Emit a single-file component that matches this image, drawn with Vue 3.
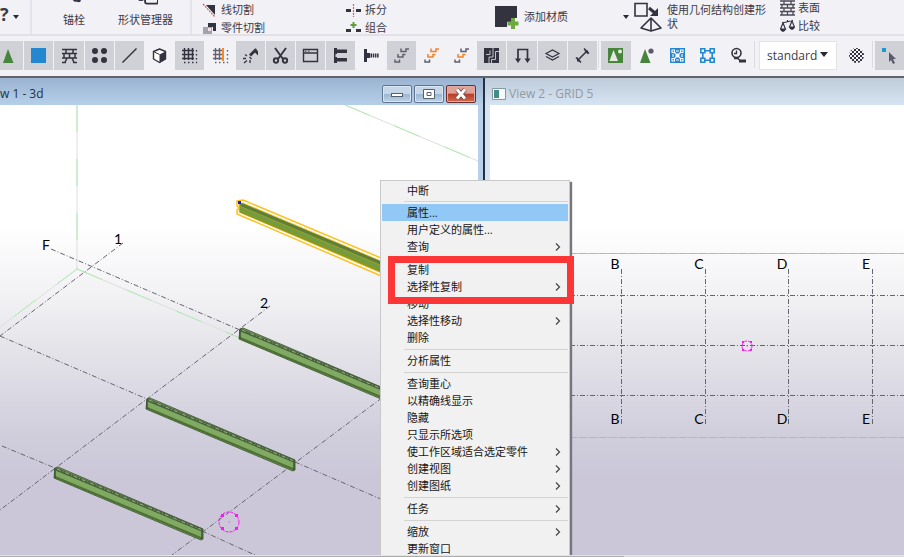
<script setup>
const ink = '#33323f'
const zShapes = (a, b, c) =>
  `<g fill="none" stroke-width="1.5"><path stroke="${a}" d="M14 7.500v3h5v-2.500h3"/><path stroke="${b}" d="M11 13v3h5v-2.500h2.500"/><path stroke="${c}" d="M8 18.500v2.500h4.500v-2.500"/></g>`
const grid = `<g fill="none" stroke="${ink}" stroke-width="1.5"><path d="M9.500 7v12M13.500 7v12M17.500 7v12M7 9.500h12M7 13.500h12M7 17.500h12"/><path stroke-width="1.300" stroke-dasharray="1.500 2.500" d="M21.500 9v13M9 21.500h13"/></g>`
const paleGrid = `<g fill="none" stroke="#62616d" stroke-width="1.4"><path d="M9.500 7v12M13.500 7v12M7 9.500h9M7 13.500h9M7 17.500h9"/><path stroke-dasharray="1.500 2.500" d="M21.500 9v13M9 21.500h13"/></g>`

const tools = [
  { name: '视图绿色三角', on: true, art: '<path fill="#47843c" d="M14 8L19.500 22H9z"/>' },
  { name: '面', on: true, art: '<path fill="#2388cf" d="M7 7h15v15H7z"/>' },
  { name: '钢筋网', on: true, art: `<path fill="none" stroke="${ink}" stroke-width="1.500" d="M7 8.500h15M7 12.500h15M7 17h15M7 21.500h4M18 21.500h4M11 8v4M18 8v4M14.500 12v5M12 17l-2 4.500M17 17l2 4.500M9 12.500V17M20 12.500V17"/>` },
  { name: '螺栓组', on: true, art: `<g fill="${ink}"><circle cx="10" cy="10" r="3"/><circle cx="19" cy="10" r="3"/><circle cx="10" cy="19" r="3"/><circle cx="19" cy="19" r="3"/></g>` },
  { name: '线', on: true, art: `<path stroke="${ink}" stroke-width="1.500" d="M7.500 21.500l14-14"/>` },
  { name: '实体', art: `<path fill="#fff" stroke="${ink}" stroke-width="1.400" stroke-linejoin="round" d="M14.500 8l6 2.500v7.500l-6 3.500-6-3.500v-7.500z"/><path fill="${ink}" d="M14.500 13.500l6-3v8l-6 3.500z"/><path fill="none" stroke="${ink}" d="M8.500 10.500l6 3"/>` },
  { name: '轴线', on: true, art: grid },
  { name: '轴线面', art: paleGrid + '<path fill="#f58a2b" d="M16 7h2v13h-2z"/>' },
  { name: '焊接', on: true, art: `<path fill="${ink}" d="M13 13.500L19 7.500h1l2 3v4l-3-3-4 4z"/><path stroke="${ink}" stroke-width="1.300" d="M11 15l-2-1.500M10 17.500H7M11 19.500l-3 2.500M14 19v3M13.500 16l2 2"/>` },
  { name: '切割', on: true, art: `<g fill="none" stroke="${ink}" stroke-width="1.900"><path d="M9 7l8 11M20 7l-8 11"/><circle cx="10" cy="19.500" r="2.200"/><circle cx="19" cy="19.500" r="2.200"/></g>` },
  { name: '视图', on: true, art: `<path fill="none" stroke="${ink}" stroke-width="1.400" d="M7.500 8.500h14v12h-14zM7.500 12h14"/><path stroke="${ink}" d="M9 10.200h1.500M12 10.200h1.500"/>` },
  { name: '构件', on: true, art: `<path fill="${ink}" d="M8 7h3v1.500h10v3.500H11v1H8zM8 16h3v1h10v3.500H11V22H8zM8 12h1.500v5H8z"/>` },
  { name: '单个螺栓', art: `<path fill="${ink}" d="M7 8h3v4h3v5h-3v4H7z"/><path stroke="${ink}" stroke-width="4" stroke-dasharray="1.500 .7" d="M13.500 14.500H22"/>` },
  { name: '钢筋', on: true, art: zShapes('#62616d', '#62616d', '#62616d') },
  { name: '钢筋组', art: zShapes('#f28227', '#f28227', '#62616d') },
  { name: '单根钢筋', art: zShapes('#62616d', '#f28227', '#62616d') },
  { name: '浇筑', on: true, art: `<path fill="${ink}" d="M7 7h15v15H7z"/><path fill="none" stroke="#d0d0d7" stroke-width=".9" d="M16 7v9h-4v6M22 10.500h-3.500v8h-4V22M13 9.500v4H9"/>` },
  { name: '荷载', on: true, art: `<path fill="none" stroke="${ink}" stroke-width="1.700" d="M10 19V8.500h9.500V19"/><path fill="${ink}" d="M7 17.500h6L10 22zM16.500 17.500h6L19.500 22z"/>` },
  { name: '图层', on: true, art: `<path fill="none" stroke="${ink}" stroke-width="1.200" d="M8 12.500l6.500-3.500 6.500 3.500-6.500 3.500zM8 15.500l6.500 3.500 6.500-3.500"/>` },
  { name: '尺寸', on: true, art: `<path fill="none" stroke="${ink}" stroke-width="1.500" d="M10 19L19 10M16 7.500l5 5M8 16.500l5 5"/><path fill="${ink}" d="M9 16v4.500h4zM16 9.500h4v4z"/>` },
]
const viewTools = [
  { name: '选择组件', on: true, art: '<path fill="#47843c" d="M7 7h15v15H7z"/><path fill="#e6eadf" d="M12.500 9L17 20H8.500z"/><circle cx="19" cy="10.500" r="2" fill="#e6eadf"/>' },
  { name: '选择对象', art: '<path fill="#47843c" d="M13 8l5.500 14H8z"/><circle cx="19" cy="10" r="2.600" fill="#5c5a6a"/>' },
  { name: '选择构件', art: '<path fill="#2388cf" d="M7 7h15v15H7z"/><g fill="none" stroke="#fff" stroke-width="1.100"><path d="M9 9h2.500v2.500H9zM17.500 9H20v2.500h-2.500zM9 17.500h2.500V20H9zM17.500 17.500H20V20h-2.500zM11.500 11.500l6 6M17.500 11.500l-6 6M13 10h3M13 19h3M10 13v3M19 13v3"/></g><circle cx="14.500" cy="14.500" r="2" fill="#fff"/>' },
  { name: '选择构件中的对象', art: '<path fill="none" stroke="#2388cf" stroke-width="1.600" d="M7.800 7.800h4v4h-4zM17.200 7.800h4v4h-4zM7.800 17.200h4v4h-4zM17.200 17.200h4v4h-4zM12 9.800h5M12 19.200h5M9.800 12v5M19.200 12v5"/>' },
  { name: '测量', art: `<circle cx="12.500" cy="12" r="4.500" fill="none" stroke="${ink}" stroke-width="1.600"/><path fill="none" stroke="${ink}" stroke-width="1.300" d="M12.500 9.500v3h-2.500M10 17.500h4l2 2"/><path fill="${ink}" d="M15 18.500h7v3h-7z"/>` },
]

const menu = [
  [{ t: '中断' }],
  [{ t: '属性...', hot: true }, { t: '用户定义的属性...' }, { t: '查询', sub: true }],
  [{ t: '复制' }, { t: '选择性复制', sub: true }, { t: '移动' }, { t: '选择性移动', sub: true }, { t: '删除' }],
  [{ t: '分析属性' }],
  [
    { t: '查询重心' }, { t: '以精确线显示' }, { t: '隐藏' }, { t: '只显示所选项' },
    { t: '使工作区域适合选定零件', sub: true }, { t: '创建视图', sub: true }, { t: '创建图纸', sub: true },
  ],
  [{ t: '任务', sub: true }],
  [{ t: '缩放', sub: true }, { t: '更新窗口' }],
]

const beams = [[240, 329], [147, 399], [55, 468]]
const columns = [
  { l: 'B', x: 621 }, { l: 'C', x: 705 }, { l: 'D', x: 788 }, { l: 'E', x: 872 },
]
</script>

<template>
  <div class="app">
    <header class="ribbon">
      <section class="group help">
        <button class="plain" aria-label="帮助"><b>?</b><i class="caret"></i></button>
      </section>
      <section class="group tall">
        <button class="plain stack">
          <svg width="24" height="12" viewBox="0 0 24 12"><path fill="none" stroke="#33323f" stroke-width="2.500" d="M11-2q1 3 4 3" /><circle cx="17" cy="0" r="2.500" fill="#33323f" /></svg>
          <span>锚栓</span>
        </button>
        <button class="plain stack">
          <svg width="24" height="12" viewBox="0 0 24 12"><path fill="none" stroke="#33323f" stroke-width="2" d="M11-3v5q0 2 2 2h10q2 0 2-2v-5" /><path fill="#33323f" d="M4 0h5v1H4z" /></svg>
          <span>形状管理器</span>
        </button>
      </section>
      <section class="group cuts">
        <button class="plain row">
          <svg width="16" height="16" viewBox="0 0 16 16"><path fill="#33323f" d="M4 3h9v10z" /><path stroke="#d65b62" stroke-width="1.200" stroke-dasharray="2 1" d="M1 2l12 13" /></svg>
          <span>线切割</span>
        </button>
        <button class="plain row">
          <svg width="16" height="16" viewBox="0 0 16 16"><path fill="#a3a2ad" d="M1 7h9v8H1z" /><path fill="#33323f" d="M6 3h8v8h-3V7H6z" /><path fill="#f2e4e8" stroke="#d65b62" stroke-dasharray="1 1" d="M5.500 7.500h4v4h-4z" /></svg>
          <span>零件切割</span>
        </button>
      </section>
      <section class="group joins">
        <button class="plain row">
          <svg width="16" height="16" viewBox="0 0 16 16"><path fill="#33323f" d="M0 7h5v3H0zM10 7h5v3h-5z" /><path stroke="#d65b62" stroke-width="1.200" stroke-dasharray="2 1" d="M7.500 2v13" /></svg>
          <span>拆分</span>
        </button>
        <button class="plain row">
          <svg width="16" height="16" viewBox="0 0 16 16"><path fill="#33323f" d="M0 9h5v3H0zM10 9h5v3h-5z" /><path stroke="#5e9e3a" stroke-width="2" d="M7.500 2v6M4.500 5h6" /></svg>
          <span>组合</span>
        </button>
      </section>
      <section class="group material">
        <button class="plain row">
          <svg width="25" height="25" viewBox="0 0 25 25"><path fill="#33323f" d="M0 1h22v12h-6v4h-4v5H0z" /><path stroke="#6fa83f" stroke-width="4" d="M18 13v11M12.500 18.500h11" /></svg>
          <span>添加材质</span>
        </button>
        <button class="plain" aria-label="更多材质"><i class="caret small"></i></button>
      </section>
      <section class="group shape">
        <button class="plain row">
          <svg width="30" height="30" viewBox="0 0 30 30"><g fill="none" stroke="#33323f" stroke-width="1.600"><path d="M2 1.500h12V14H2z" /><path stroke-linejoin="round" d="M18 16L8 26l10 3 10-3zM18 16v12" /></g><path stroke="#33323f" stroke-width="3" d="M16 6l6 5" /><path fill="#33323f" d="M25 14h-8l8-8z" /></svg>
          <span>使用几何结构创建形状</span>
        </button>
      </section>
      <section class="group compare">
        <button class="plain row">
          <svg width="15" height="16" viewBox="0 0 15 16"><path fill="none" stroke="#4b4a57" stroke-width="1.300" d="M0 1h15M0 4.500h15M0 8h15M0 11.500h15M0 15h15M4 1v3M11 1v3M7.500 4v4M2 4v4M13 4v4M4 8v3M11 8v3M7.500 11v4M2 11v4M13 11v4" /></svg>
          <span>表面</span>
        </button>
        <button class="plain row">
          <svg width="15" height="16" viewBox="0 0 15 16"><g fill="none" stroke="#33323f" stroke-width="1.200"><path d="M2 5l11-2.500M7.500 2v2M3 5l-2.500 6h5zM12 3l-2.500 6h5z" /></g><path fill="#33323f" d="M0 11h6q-1 3-3 3t-3-3zM9 9h6q-1 3-3 3t-3-3z" /></svg>
          <span>比较</span>
        </button>
      </section>
    </header>

    <nav class="toolbar">
      <div class="cells wide">
        <button v-for="t in tools" :key="t.name" class="cell" :class="{ on: t.on }" :aria-label="t.name">
          <svg viewBox="0 0 29 29" v-html="t.art"></svg>
        </button>
      </div>
      <div class="cells view">
        <button v-for="t in viewTools" :key="t.name" class="cell" :class="{ on: t.on }" :aria-label="t.name">
          <svg viewBox="0 0 29 29" v-html="t.art"></svg>
        </button>
      </div>
      <div class="cells filter">
        <div class="pick">
          <select aria-label="选择过滤器"><option>standard</option></select>
          <i class="caret"></i>
        </div>
        <button class="cell noise" aria-label="过滤器">
          <svg viewBox="0 0 29 29">
            <defs><pattern id="check" width="4" height="4" patternUnits="userSpaceOnUse"><path fill="#33323f" d="M0 0h2v2H0zM2 2h2v2H2z" /></pattern></defs>
            <circle cx="14.500" cy="14.500" r="7.500" fill="url(#check)" />
          </svg>
        </button>
      </div>
      <div class="cells last">
        <button class="cell on" aria-label="选择">
          <svg viewBox="0 0 29 29"><path fill="#179bd7" d="M7 7h4v4H7z" /><path fill="#5c5a68" d="M14 11l7 7h-3l2 4-2 1-2-4-2 2z" /></svg>
        </button>
      </div>
    </nav>

    <main class="workspace">
      <section class="window active">
        <div class="title">
          <h2>w 1 - 3d</h2>
          <div class="controls">
            <button aria-label="最小化"><svg width="14" height="12"><rect x="1.500" y="5.500" width="11" height="3" fill="#fff" stroke="#55606e" /></svg></button>
            <button aria-label="最大化"><svg width="14" height="12"><path fill="#fff" stroke="#55606e" d="M1.500 1.500h11v9h-11zM5 4.500h4v3H5z" /></svg></button>
            <button class="close" aria-label="关闭"><svg width="14" height="12"><path stroke="#5b4747" stroke-width="4.500" d="M3 1.500l8 9M11 1.500l-8 9" /><path stroke="#fff" stroke-width="3" d="M3 1.500l8 9M11 1.500l-8 9" /></svg></button>
          </div>
        </div>
        <svg class="canvas" viewBox="0 105 478 450" preserveAspectRatio="xMinYMin slice">
          <g class="bound"><path d="M77 105V269L0 327M77 269L240 338M345 105L478 161" /></g>
          <g class="bound green"><path d="M77 105V269L0 327M77 269L240 338M345 105L478 161" /></g>
          <g class="axis">
            <path d="M51 249L240 330M123 243L0 336M270 306L0 510M0 336L147 399M2 446L55 468M478 326L172 555M295 462L478 541M202 531L255 555" />
          </g>
          <g v-for="b in beams" :key="b[0]" :transform="`translate(${b[0]} ${b[1]})`">
            <path fill="#80a962" stroke="#4b6241" stroke-width="1" d="M0 0L3-1L148 61V71L146 72L-1 10z" />
            <path stroke="#4d7035" stroke-width="2" d="M0 9L147 70.500" />
            <path stroke="#48603d" stroke-width="3" d="M1 1L147 62" />
            <path stroke="#93b580" stroke-width="1" stroke-dasharray="4 2 1 2" d="M2 1L147 62" />
            <path fill="none" stroke="#3d5434" stroke-width="1.500" d="M0 0V10M147 61V71" />
          </g>
          <g>
            <path fill="#fff" stroke="#ffc021" stroke-width="1.500" d="M237 201L243 200L400 266V284L237 214V210L239 208L237 206z" />
            <path fill="#709d43" stroke="#ffc021" stroke-width="1" d="M239 203H243L400 269V281L239 212z" />
            <path stroke="#5e7f3b" stroke-width="3" d="M241 204.500L400 271" />
            <path stroke="#a39a21" stroke-width="1" d="M240 206.500L400 273.500" />
            <path stroke="#8c981b" stroke-width="2" d="M240 211.500L400 279" />
            <path fill="#1420d5" d="M238 201h3v3h-3z" />
          </g>
          <g class="mark"><circle cx="229" cy="522" r="10" /><path d="M221 514h3v3h-3zM235 514h3v3h-3zM221 527h3v3h-3zM235 527h3v3h-3zM228.500 521.500h1v1h-1z" /></g>
          <g class="label"><text x="46" y="250">F</text><text x="118" y="244">1</text><text x="264" y="308">2</text></g>
        </svg>
      </section>

      <section class="window">
        <div class="title">
          <svg class="doc" width="14" height="12"><path fill="#f7fafa" stroke="#8597a3" d="M.5.5h13v11H.5z" /><path fill="#438d82" d="M2 2h5v8H2z" /></svg>
          <h2>View 2 - GRID 5</h2>
        </div>
        <svg class="canvas" viewBox="490 105 414 450" preserveAspectRatio="xMinYMin slice">
          <path class="edge" d="M490 253.500H904M490 437.500H904" />
          <path class="edge dashes" d="M490 253.500H904M490 437.500H904" />
          <g class="axis">
            <path d="M490 295.500H904M490 345.500H904M490 395.500H904" />
            <path v-for="c in columns" :key="c.l" :d="`M${c.x}.5 269V425`" />
          </g>
          <g class="label">
            <template v-for="c in columns" :key="c.l">
              <text :x="c.x - 6" y="269">{{ c.l }}</text>
              <text :x="c.x - 6" y="424">{{ c.l }}</text>
            </template>
          </g>
          <g class="mark"><circle cx="747" cy="346" r="5" /><path d="M742 341h2v2h-2zM750 341h2v2h-2zM742 349h2v2h-2zM750 349h2v2h-2zM746.500 345.500h1v1h-1z" /></g>
        </svg>
      </section>

      <div class="menu" role="menu">
        <ul v-for="(part, i) in menu" :key="i">
          <li v-for="m in part" :key="m.t">
            <button role="menuitem" :class="{ hot: m.hot }">
              <span>{{ m.t }}</span>
              <svg v-if="m.sub" width="6" height="8" viewBox="0 0 6 8"><path fill="none" stroke="#444" stroke-width="1.200" d="M1 .5L4.500 4 1 7.500" /></svg>
            </button>
          </li>
        </ul>
      </div>
      <div class="highlight"></div>
    </main>
    <footer class="status"></footer>
  </div>
</template>

<style>
body { margin: 0; }
</style>

<style scoped>
* { box-sizing: border-box; }
.app {
  display: flex;
  flex-direction: column;
  height: 100vh;
  overflow: hidden;
  background: #f2f1f6;
  color: #3c3b46;
  font: 11px/18px "Open Sans", "Noto Sans CJK SC", sans-serif;
}
button { font: inherit; color: inherit; padding: 0; margin: 0; }
svg { display: block; flex: none; }
.plain { border: 0; background: none; display: flex; align-items: center; text-align: left; }

.ribbon { display: flex; height: 36px; flex: none; border-bottom: 2px solid #e2e1e8; overflow: hidden; }
.group { display: flex; align-items: flex-start; flex: none; }
.help { width: 32px; border-right: 2px solid #e4e3ea; }
.help b { font-size: 18px; line-height: 28px; width: 13px; }
.caret { border: 3px solid transparent; border-top: 4px solid #292833; border-bottom: 0; margin-top: 5px; }
.caret.small { margin-top: 0; }
.tall { width: 160px; padding-left: 30px; gap: 32px; border-right: 2px solid #e4e3ea; }
.stack { flex-direction: column; }
.stack svg { height: 11px; }
.row { gap: 3px; }
.cuts, .joins { flex-direction: column; padding-top: 1px; }
.cuts { padding-left: 10px; width: 154px; }
.joins { width: 149px; }
.cuts .row, .joins .row, .compare .row { height: 18px; flex: none; }
.material { height: 34px; align-items: center; justify-content: space-between; width: 134px; }
.material .row { gap: 4px; }
.shape { margin-left: 4px; width: 147px; flex: 0 1 147px; }
.shape .row { gap: 4px; height: 34px; line-height: 14px; }
.shape span { width: 100px; }
.compare { flex-direction: column; margin-top: -1px; }

.toolbar { display: flex; height: 42px; flex: none; padding: 5px 0 8px; border-bottom: 2px solid #62636a; }
.cells { display: flex; gap: 1px; align-items: flex-start; }
.wide { flex: 604 1 0; margin-left: -6px; }
.view { flex: 152 1 0; }
.cells + .cells { border-left: 1px solid #dcdbe2; padding-left: 2px; margin-left: 1px; }
.cell { flex: 1 1 0; height: 29px; border: 0; background: none; display: flex; justify-content: center; }
.cell svg { width: 29px; height: 29px; }
.on { background: #d0d0d7; }
.filter { flex: none; width: 117px; }
.filter .pick { margin-left: 2px; }
.noise { margin-left: 4px; }
.last { flex: none; width: 32px; }
.pick { position: relative; width: 78px; flex: none; }
.pick select {
  appearance: none;
  width: 100%;
  height: 29px;
  padding: 0 0 0 7px;
  border: 1px solid #e3e2e8;
  background: #fff;
  color: #3c3b46;
  font: 12px "Open Sans", sans-serif;
}
.pick .caret { position: absolute; right: 9px; top: 6px; border-width: 5px 4px 0; pointer-events: none; }

.workspace { position: relative; flex: 1; min-height: 0; display: grid; grid-template-columns: 485fr 419fr; overflow: hidden; }
.window { display: flex; flex-direction: column; min-width: 0; min-height: 0; background: #d8e4f2; padding-left: 5px; }
.window.active { background: #b7d0eb; padding: 0 5px 0 0; border-right: 2px solid #22313d; }
.title { display: flex; align-items: center; height: 27px; flex: none; gap: 3px; background: linear-gradient(#bfccda, #d5e3f2); margin-left: -5px; padding: 5px 0 0 7px; color: #929aa2; }
.active .title { background: linear-gradient(#99b3d1, #b6cfe9); margin: 0 -5px 0 0; padding: 5px 7px 0 0; justify-content: space-between; color: #27313c; }
.title h2 { margin: 0; font: 12px/18px "Open Sans", sans-serif; }
.controls { display: flex; gap: 2px; }
.controls button { width: 30px; height: 18px; border: 1px solid #60758f; border-radius: 2px; display: flex; align-items: center; justify-content: center; background: linear-gradient(#c5d6e9 50%, #9bb5d2 50%, #bdd2e8); box-shadow: inset 0 0 0 1px #d9e5f2; }
.controls .close { border-color: #672f2d; background: linear-gradient(#e0a296 45%, #b93d28 50%, #cf6a50); box-shadow: inset 0 0 0 1px #e2aaa0; }
.canvas { flex: 1 1 0; min-height: 0; width: 100%; background: linear-gradient(#fff 27%, #f1f0f3 43%, #e6e5ea 53%, #dad8e3 64%, #cfccdb 75%, #cbc7d9 83%); }

.axis { fill: none; stroke: #66656e; stroke-width: 1; stroke-dasharray: 5 2 1 2; }
.bound { fill: none; stroke: #dcdfdc; stroke-width: 1; }
.bound.green { stroke: #b0ecb0; stroke-dasharray: 27 27; }
.edge { stroke: #b5c5b6; }
.edge.dashes { stroke: #8ed092; stroke-dasharray: 6 4; }
.label { font: 14px Lato, sans-serif; fill: #000; text-anchor: middle; }
.mark circle { fill: none; stroke: #f01cf0; stroke-dasharray: 3 1; }
.mark path { fill: #f01cf0; }

.menu { position: absolute; left: 380px; top: 102px; width: 190px; padding: 1px; border: 1px solid #c9c9c9; background: #f1f1f1; box-shadow: 2px 2px 1px #77767e; color: #161616; }
.menu ul { list-style: none; margin: 0; padding: 0; }
.menu ul + ul::before { content: ""; display: block; height: 1px; margin: 3px 0 2px 22px; background: #d3d3d3; }
.menu ul:nth-child(2)::before { margin-top: 2px; }
.menu button { display: flex; align-items: center; justify-content: space-between; width: 100%; height: 17px; padding: 0 7px 0 25px; border: 0; background: none; line-height: 17px; }
.menu .hot { background: #91c8f6; }
.highlight { position: absolute; left: 388px; top: 178px; width: 186px; height: 48px; border: 7px solid #fc3636; pointer-events: none; }
.status { height: 2px; flex: none; background: linear-gradient(90deg, #ababab 69%, #dadada 69%); border-top: 1px solid #e4e4e6; }
</style>
